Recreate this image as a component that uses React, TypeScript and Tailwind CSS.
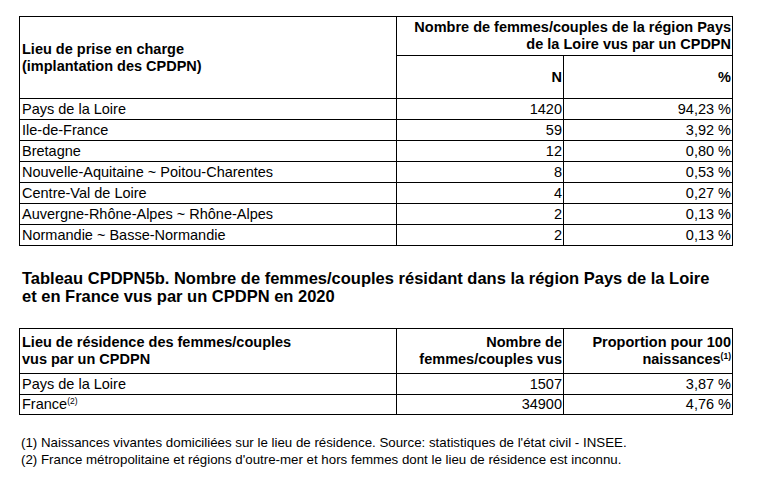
import React from "react";

const rows1: [string, string, string][] = [
  ["Pays de la Loire", "1420", "94,23 %"],
  ["Ile-de-France", "59", "3,92 %"],
  ["Bretagne", "12", "0,80 %"],
  ["Nouvelle-Aquitaine ~ Poitou-Charentes", "8", "0,53 %"],
  ["Centre-Val de Loire", "4", "0,27 %"],
  ["Auvergne-Rhône-Alpes ~ Rhône-Alpes", "2", "0,13 %"],
  ["Normandie ~ Basse-Normandie", "2", "0,13 %"],
];

function Sup({ children }: { children: React.ReactNode }) {
  return <span className="relative -top-[5px] text-[8.5px] leading-none">{children}</span>;
}

export default function App() {
  const cell = "border border-black p-0 leading-[17px] whitespace-nowrap";
  return (
    <div
      className="w-[759px] h-[481px] bg-white text-black pl-[19px] pt-[16px]"
      style={{ fontFamily: '"Liberation Sans", Arial, sans-serif' }}
    >
      <table className="table-fixed border-collapse text-[14.5px] w-[713px]">
        <colgroup>
          <col className="w-[377px]" />
          <col className="w-[167px]" />
          <col className="w-[169px]" />
        </colgroup>
        <tbody>
          <tr className="h-[39px]">
            <td rowSpan={2} className={`${cell} font-bold pl-[2px] align-middle`}>
              Lieu de prise en charge
              <br />
              (implantation des CPDPN)
            </td>
            <td colSpan={2} className={`${cell} font-bold text-right pr-[1px] align-middle`}>
              Nombre de femmes/couples de la région Pays
              <br />
              de la Loire vus par un CPDPN
            </td>
          </tr>
          <tr className="h-[43px]">
            <td className={`${cell} font-bold text-right pr-[1px]`}>N</td>
            <td className={`${cell} font-bold text-right pr-[1px]`}>%</td>
          </tr>
          {rows1.map(([a, b, c]) => (
            <tr key={a} className="h-[21px]">
              <td className={`${cell} pl-[2px]`}>{a}</td>
              <td className={`${cell} text-right pr-[1px]`}>{b}</td>
              <td className={`${cell} text-right pr-[1px]`}>{c}</td>
            </tr>
          ))}
        </tbody>
      </table>

      <div className="mt-[23px] pl-[3px] font-bold text-[16.5px] leading-[18px] whitespace-nowrap">
        Tableau CPDPN5b. Nombre de femmes/couples résidant dans la région Pays de la Loire
        <br />
        et en France vus par un CPDPN en 2020
      </div>

      <table className="mt-[23px] table-fixed border-collapse text-[14.5px] w-[713px]">
        <colgroup>
          <col className="w-[377px]" />
          <col className="w-[167px]" />
          <col className="w-[169px]" />
        </colgroup>
        <tbody>
          <tr className="h-[45px]">
            <td className={`${cell} font-bold pl-[2px]`}>
              Lieu de résidence des femmes/couples
              <br />
              vus par un CPDPN
            </td>
            <td className={`${cell} font-bold text-right pr-[1px]`}>
              Nombre de
              <br />
              femmes/couples vus
            </td>
            <td className={`${cell} font-bold text-right pr-[1px]`}>
              Proportion pour 100
              <br />
              naissances<Sup>(1)</Sup>
            </td>
          </tr>
          <tr className="h-[21px]">
            <td className={`${cell} pl-[2px]`}>Pays de la Loire</td>
            <td className={`${cell} text-right pr-[1px]`}>1507</td>
            <td className={`${cell} text-right pr-[1px]`}>3,87 %</td>
          </tr>
          <tr className="h-[20px]">
            <td className={`${cell} pl-[2px]`}>
              France<Sup>(2)</Sup>
            </td>
            <td className={`${cell} text-right pr-[1px]`}>34900</td>
            <td className={`${cell} text-right pr-[1px]`}>4,76 %</td>
          </tr>
        </tbody>
      </table>

      <div className="mt-[19px] pl-[2px] text-[13.3px] leading-[17px] whitespace-nowrap">
        <div>(1) Naissances vivantes domiciliées sur le lieu de résidence. Source: statistiques de l'état civil - INSEE.</div>
        <div>(2) France métropolitaine et régions d'outre-mer et hors femmes dont le lieu de résidence est inconnu.</div>
      </div>
    </div>
  );
}
